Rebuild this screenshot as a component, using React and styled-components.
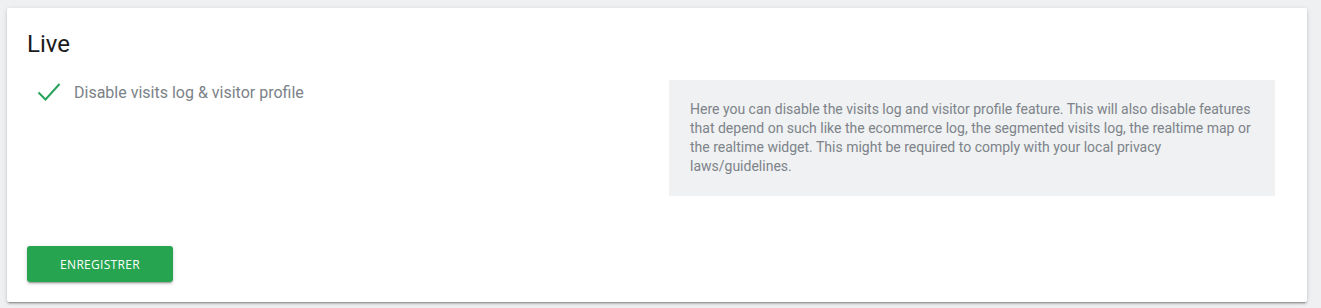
import React from "react";
import styled, { createGlobalStyle } from "styled-components";

const GlobalStyle = createGlobalStyle`
  html, body {
    margin: 0;
    padding: 0;
    background: #eef0f1;
  }
  body {
    font-family: Roboto, "Liberation Sans", Arial, sans-serif;
  }
`;

const Page = styled.div`
  padding: 8px 14px 7px 7px;
`;

const Card = styled.div`
  background: #fff;
  border-radius: 2px;
  box-shadow: 0 2px 2px 0 rgba(0, 0, 0, 0.14), 0 1px 5px 0 rgba(0, 0, 0, 0.12),
    0 3px 1px -2px rgba(0, 0, 0, 0.2);
  padding: 22px 20px 20px 20px;
`;

const Title = styled.h2`
  margin: 0 0 16px 0;
  font-size: 24px;
  font-weight: 400;
  color: #1a1a1a;
  line-height: 28px;
`;

const FieldRow = styled.div`
  display: grid;
  grid-template-columns: 1fr 606px;
  column-gap: 20px;
  padding-right: 12px;
`;

const CheckLabel = styled.label`
  display: flex;
  align-items: center;
  gap: 13px;
  padding: 7px 0 0 10px;
  height: 22px;
  font-size: 16px;
  color: #7b8288;
  cursor: pointer;
`;

const CheckMark = styled.svg`
  width: 24px;
  height: 20px;
  flex-shrink: 0;
`;

const HelpBox = styled.div`
  margin-top: 6px;
  background: #eff1f2;
  padding: 20px 21px 20px 21px;
  font-family: "Liberation Sans Narrow", "Roboto", sans-serif;
  font-size: 14px;
  line-height: 19px;
  color: #7d8389;
`;

const Actions = styled.div`
  margin-top: 50px;
`;

const SaveButton = styled.button`
  width: 146px;
  height: 36px;
  border: none;
  border-radius: 3px;
  background: #26a450;
  color: #fff;
  font-family: "Open Sans", "Noto Sans", sans-serif;
  font-size: 12px;
  font-weight: 500;
  letter-spacing: 0.3px;
  text-transform: uppercase;
  box-shadow: 0 2px 2px 0 rgba(0, 0, 0, 0.14), 0 1px 5px 0 rgba(0, 0, 0, 0.12),
    0 3px 1px -2px rgba(0, 0, 0, 0.2);
  cursor: pointer;
`;

export default function App() {
  return (
    <>
      <GlobalStyle />
      <Page>
        <Card>
          <Title>Live</Title>
          <FieldRow>
            <CheckLabel>
              <CheckMark viewBox="0 0 24 20">
                <path
                  d="M1.5 10.5 L8.5 17.5 L22.5 2"
                  fill="none"
                  stroke="#27a35a"
                  strokeWidth="2"
                />
              </CheckMark>
              Disable visits log &amp; visitor profile
            </CheckLabel>
            <HelpBox>
              Here you can disable the visits log and visitor profile feature.
              This will also disable features that depend on such like the
              ecommerce log, the segmented visits log, the realtime map or the
              realtime widget. This might be required to comply with your local
              privacy laws/guidelines.
            </HelpBox>
          </FieldRow>
          <Actions>
            <SaveButton>Enregistrer</SaveButton>
          </Actions>
        </Card>
      </Page>
    </>
  );
}
